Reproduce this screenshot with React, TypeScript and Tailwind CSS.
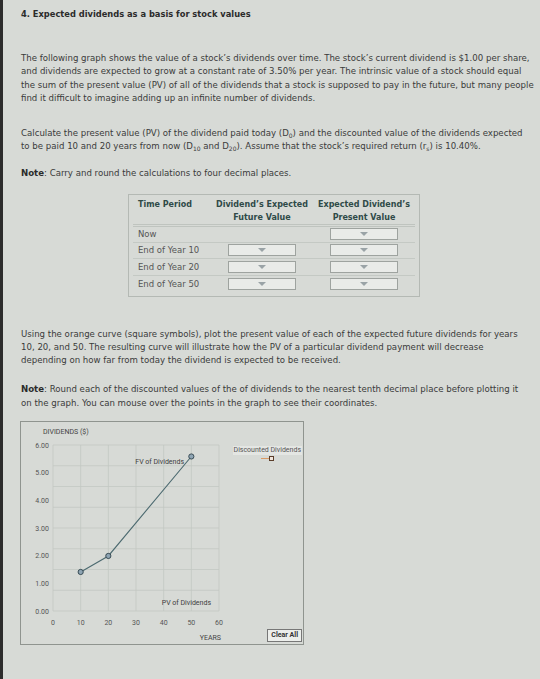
import type { ReactNode } from "react";

const rows = [
  { label: "Now", fv: false },
  { label: "End of Year 10", fv: true },
  { label: "End of Year 20", fv: true },
  { label: "End of Year 50", fv: true },
];

// plot geometry (svg units)
const px0 = 32;
const px1 = 198;
const py0 = 23;
const py1 = 189;
const xAt = (yr: number) => px0 + ((px1 - px0) * yr) / 60;
const yAt = (v: number) => py1 - ((py1 - py0) * v) / 6;

const fvPoints = [
  { yr: 10, v: 1.4106 },
  { yr: 20, v: 1.9898 },
  { yr: 50, v: 5.5849 },
];

function Dropdown() {
  return (
    <div className="mx-auto flex h-[12px] w-[68px] items-center justify-center border border-[#9ea39f] bg-[#e9ebe8]">
      <span className="h-0 w-0 border-x-[4px] border-t-[4px] border-x-transparent border-t-[#9aa3a6]" />
    </div>
  );
}

function Sub({ children }: { children: ReactNode }) {
  return <sub className="text-[6px] leading-none">{children}</sub>;
}

function Chart() {
  const grid = [];
  for (let i = 0; i <= 6; i++) {
    grid.push(
      <line key={`v${i}`} x1={xAt(i * 10)} x2={xAt(i * 10)} y1={py0} y2={py1} stroke="#c3c8c3" strokeWidth="0.8" />,
    );
  }
  for (let i = 0; i <= 8; i++) {
    const y = py0 + ((py1 - py0) * i) / 8;
    grid.push(<line key={`h${i}`} x1={px0} x2={px1} y1={y} y2={y} stroke="#c3c8c3" strokeWidth="0.8" />);
  }
  const yLabels = ["6.00", "5.00", "4.00", "3.00", "2.00", "1.00", "0.00"];
  const path = fvPoints.map((p) => `${xAt(p.yr)},${yAt(p.v)}`).join(" ");

  return (
    <svg width="205" height="224" viewBox="0 0 205 224" className="shrink-0" fontFamily="Roboto, sans-serif">
      {grid}
      <text x="22" y="12" fontSize="7" fill="#444">
        DIVIDENDS ($)
      </text>
      {yLabels.map((l, i) => (
        <text key={l} x="28" y={py0 + i * ((py1 - py0) / 6) + 2.5} fontSize="7" fill="#555" textAnchor="end">
          {l}
        </text>
      ))}
      {[0, 10, 20, 30, 40, 50, 60].map((yr) => (
        <text key={yr} x={xAt(yr)} y="203" fontSize="7" fill="#555" textAnchor="middle">
          {yr}
        </text>
      ))}
      <text x="200" y="218" fontSize="7" fill="#444" textAnchor="end">
        YEARS
      </text>
      <polyline points={path} fill="none" stroke="#4c6a70" strokeWidth="1.1" />
      {fvPoints.map((p) => (
        <circle key={p.yr} cx={xAt(p.yr)} cy={yAt(p.v)} r="2.6" fill="#8ea4b3" stroke="#2f424b" strokeWidth="0.9" />
      ))}
      <text x="163" y="42" fontSize="7" fill="#3d3d3d" textAnchor="end">
        FV of Dividends
      </text>
      <text x="190" y="183" fontSize="7" fill="#3d3d3d" textAnchor="end">
        PV of Dividends
      </text>
    </svg>
  );
}

export default function App() {
  return (
    <div className="min-h-[679px] w-[540px] border-l-[3px] border-[#2c2c2c] bg-[#d7dad6] pb-8 pl-[18px] pr-[6px] pt-[9px] font-['DejaVu_Sans',sans-serif] text-[8.6px] leading-[13.3px] text-[#3a3a3a]">
      <h1 className="text-[8.3px] font-bold leading-[11px] text-[#2b2b2b]">
        4. Expected dividends as a basis for stock values
      </h1>

      <p className="mt-[32px]">
        The following graph shows the value of a stock’s dividends over time. The stock’s current dividend is $1.00 per share,
        and dividends are expected to grow at a constant rate of 3.50% per year. The intrinsic value of a stock should equal the
        sum of the present value (PV) of all of the dividends that a stock is supposed to pay in the future, but many people find
        it difficult to imagine adding up an infinite number of dividends.
      </p>

      <p className="mt-[22px] pr-[8px]">
        Calculate the present value (PV) of the dividend paid today (D<Sub>0</Sub>) and the discounted value of the dividends
        expected to be paid 10 and 20 years from now (D<Sub>10</Sub> and D<Sub>20</Sub>). Assume that the stock’s required
        return (r<Sub>s</Sub>) is 10.40%.
      </p>

      <p className="mt-[13px]">
        <b className="text-[#2b2b2b]">Note</b>: Carry and round the calculations to four decimal places.
      </p>

      <div className="ml-[107px] mt-[14px] w-[292px] border border-[#b4b9b4] px-[4px] pb-[4px] pt-[1px]">
        <table className="w-full border-collapse text-[8px] leading-[14px]">
          <thead>
            <tr className="border-b-[3px] border-double border-[#bfc4bf] align-top font-bold leading-[13px] text-[#2f4a48]">
              <th className="w-[78px] pl-[5px] pt-[2px] text-left">Time Period</th>
              <th className="w-[102px] pt-[2px] text-center">
                Dividend’s Expected
                <br />
                Future Value
              </th>
              <th className="pt-[2px] text-center">
                Expected Dividend’s
                <br />
                Present Value
              </th>
            </tr>
          </thead>
          <tbody>
            {rows.map((r) => (
              <tr key={r.label} className="h-[16.5px] border-b border-[#c4c9c4] last:border-b-0">
                <td className="pl-[5px] text-[8.5px] text-[#555]">{r.label}</td>
                <td>{r.fv && <Dropdown />}</td>
                <td>
                  <Dropdown />
                </td>
              </tr>
            ))}
          </tbody>
        </table>
      </div>

      <p className="mt-[31px] pr-[10px]">
        Using the orange curve (square symbols), plot the present value of each of the expected future dividends for years 10,
        20, and 50. The resulting curve will illustrate how the PV of a particular dividend payment will decrease depending on how
        far from today the dividend is expected to be received.
      </p>

      <p className="mt-[16px] pr-[10px]">
        <b className="text-[#2b2b2b]">Note</b>: Round each of the discounted values of the of dividends to the nearest tenth
        decimal place before plotting it on the graph. You can mouse over the points in the graph to see their coordinates.
      </p>

      <div className="-ml-px mt-[11px] flex h-[224px] w-[284px] border border-[#8f948f]">
        <Chart />
        <div className="flex flex-1 flex-col items-end justify-between pb-[2px] pr-[1px] pt-[24px] font-['Roboto',sans-serif]">
          <div className="flex flex-col items-center">
            <span className="bg-[#e4e6e3] px-px text-[7px] leading-[9px] text-[#555]">Discounted Dividends</span>
            <span className="mt-[1px] flex items-center">
              <span className="h-px w-[8px] bg-[#d99a66]" />
              <span className="h-[5px] w-[5px] border border-[#5a3d2a] bg-[#f0e6dc]" />
            </span>
          </div>
          <button className="border border-[#777] bg-[#eceeeb] px-[3px] text-[7px] font-bold leading-[11px] text-[#333]">
            Clear All
          </button>
        </div>
      </div>
    </div>
  );
}
